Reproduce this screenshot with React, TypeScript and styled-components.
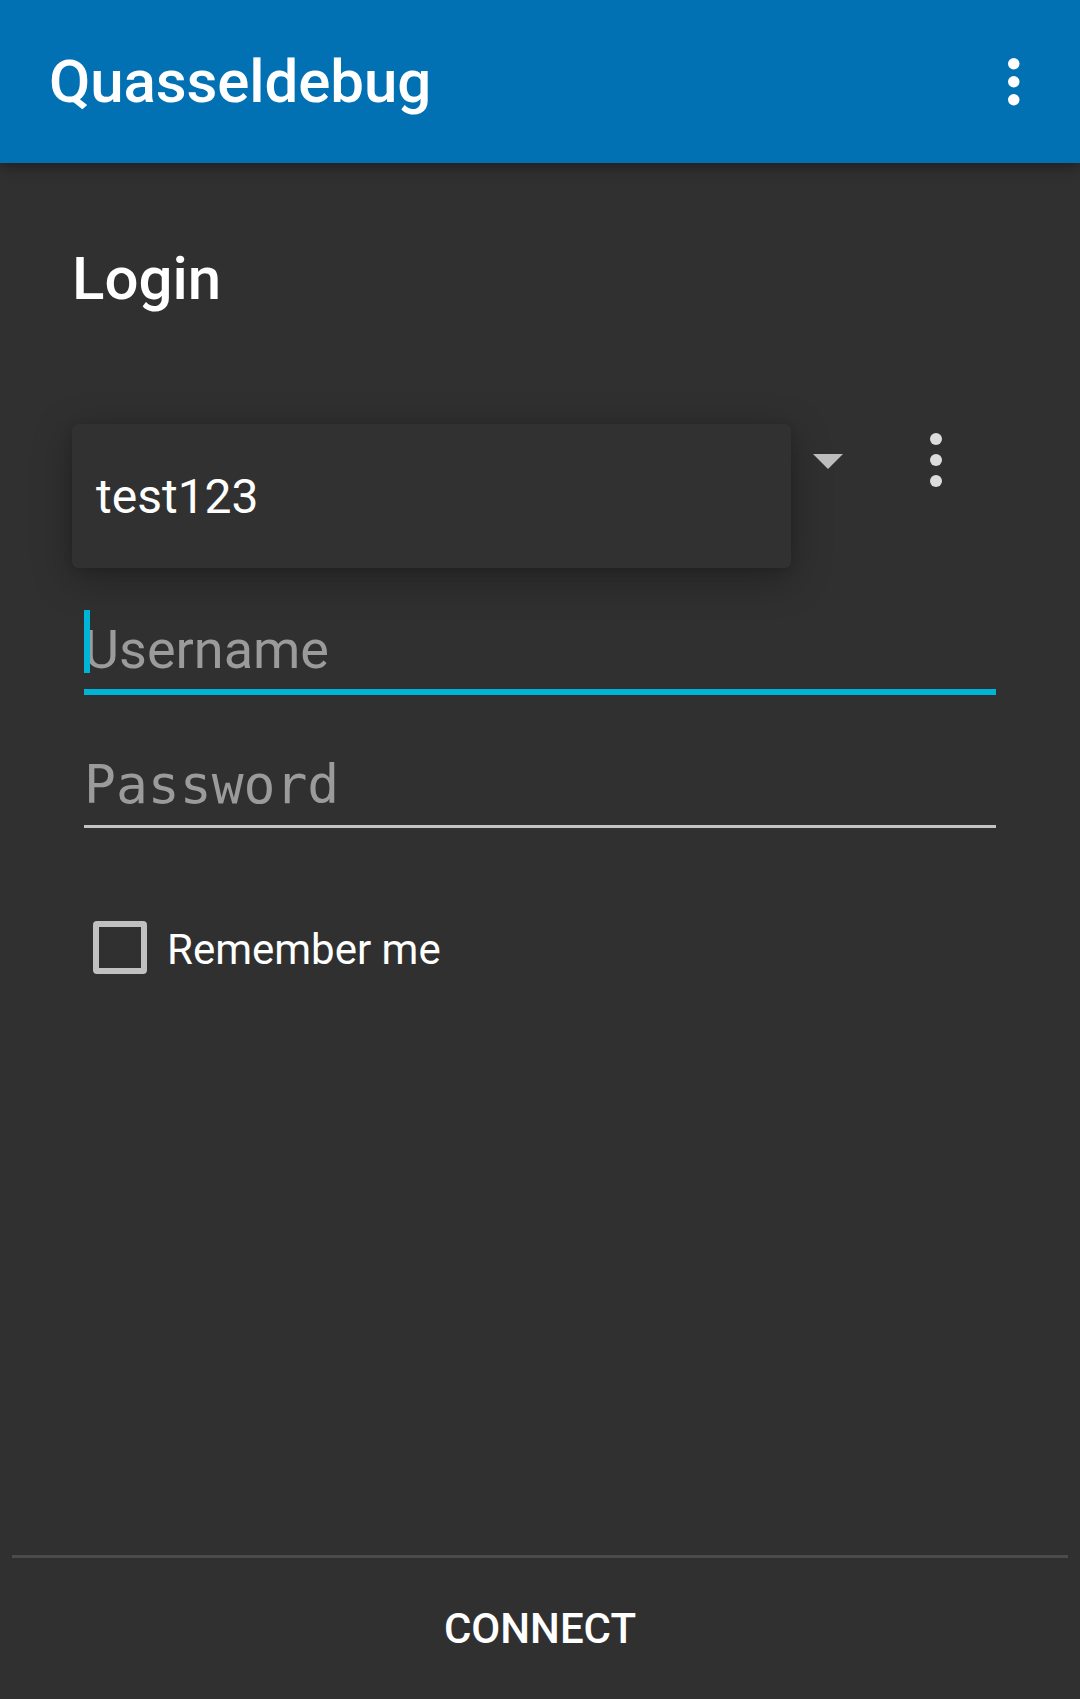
import React from "react";
import styled, { createGlobalStyle } from "styled-components";

const GlobalStyle = createGlobalStyle`
  html, body {
    margin: 0;
    padding: 0;
    background: #303030;
  }
  body {
    font-family: Roboto, "Noto Sans", "Liberation Sans", sans-serif;
    color: #ffffff;
  }
  * { box-sizing: border-box; }
`;

const Screen = styled.div`
  display: flex;
  flex-direction: column;
  height: 100vh;
  background: #303030;
  overflow: hidden;
`;

const Toolbar = styled.header`
  position: relative;
  z-index: 2;
  display: flex;
  align-items: center;
  justify-content: space-between;
  height: 163px;
  padding: 0 60px 0 49px;
  background: #0271b4;
  box-shadow: 0 3px 14px rgba(0, 0, 0, 0.4);
  flex-shrink: 0;
`;

const Title = styled.h1`
  margin: 0;
  font-family: Roboto, "Liberation Sans", sans-serif;
  font-weight: 500;
  font-size: 60px;
  line-height: 70px;
  letter-spacing: -0.1px;
  color: #ffffff;
`;

const Main = styled.main`
  flex: 1;
  display: flex;
  flex-direction: column;
  padding: 0 84px 0 72px;
`;

const Heading = styled.h2`
  margin: 81px 0 0;
  font-family: Roboto, "Liberation Sans", sans-serif;
  font-weight: 500;
  font-size: 60px;
  line-height: 70px;
  color: #ffffff;
`;

const SpinnerRow = styled.div`
  display: flex;
  align-items: flex-start;
  margin-top: 110px;
  height: 144px;
`;

const SpinnerCard = styled.div`
  display: flex;
  align-items: center;
  width: 719px;
  height: 144px;
  padding-left: 24px;
  background: #313131;
  border-radius: 6px;
  box-shadow: 0 10px 40px rgba(0, 0, 0, 0.3), 0 2px 8px rgba(0, 0, 0, 0.12);
  font-size: 48px;
  color: #ffffff;
`;

const Arrow = styled.svg`
  margin: 30px 0 0 22px;
  flex-shrink: 0;
`;

const MoreIcon = styled.svg`
  margin: 9px 0 0 87px;
  flex-shrink: 0;
`;

const Field = styled.div<{ $first?: boolean }>`
  display: flex;
  flex-direction: column;
  margin: ${(p) => (p.$first ? "49.6px" : "58.4px")} 0 0 12px;
`;

const FieldText = styled.div<{ $mono?: boolean }>`
  position: relative;
  height: 64px;
  font-family: ${(p) =>
    p.$mono
      ? `"DejaVu Sans Mono", "Liberation Mono", monospace`
      : `Roboto, "Liberation Sans", sans-serif`};
  font-size: ${(p) => (p.$mono ? "53px" : "54px")};
  line-height: 64px;
  color: #9b9b9b;
  white-space: nowrap;
`;

const Caret = styled.span`
  position: absolute;
  left: 0;
  top: -8px;
  width: 6px;
  height: 63px;
  background: #00b4d8;
`;

const Underline = styled.div<{ $focused?: boolean }>`
  margin-top: ${(p) => (p.$focused ? "7.4px" : "7.6px")};
  height: ${(p) => (p.$focused ? "6px" : "3px")};
  background: ${(p) => (p.$focused ? "#00b4d8" : "#c4c4c4")};
`;

const CheckRow = styled.label`
  display: flex;
  align-items: center;
  margin: 93px 0 0 21px;
  gap: 20px;
`;

const CheckBox = styled.span`
  width: 54px;
  height: 53px;
  border: 6px solid #c0c0c0;
  border-radius: 4px;
  flex-shrink: 0;
`;

const CheckLabel = styled.span`
  font-family: Roboto, "Liberation Sans", sans-serif;
  font-size: 42px;
  line-height: 50px;
  padding-top: 4px;
  color: #ffffff;
`;

const Footer = styled.footer`
  display: flex;
  flex-direction: column;
  flex-shrink: 0;
`;

const Divider = styled.div`
  height: 3px;
  margin: 0 12px;
  background: #4b4b4b;
`;

const ConnectButton = styled.button`
  height: 141px;
  border: none;
  background: transparent;
  font-family: Roboto, "Liberation Sans", sans-serif;
  font-weight: 500;
  font-size: 42px;
  color: #ffffff;
  letter-spacing: 0;
  padding: 0;
`;

const Dots = ({ size, gap, color }: { size: number; gap: number; color: string }) => {
  const r = size / 2;
  return (
    <>
      <circle cx={r} cy={r} r={r} fill={color} />
      <circle cx={r} cy={r + gap} r={r} fill={color} />
      <circle cx={r} cy={r + gap * 2} r={r} fill={color} />
    </>
  );
};

export default function App() {
  return (
    <>
      <GlobalStyle />
      <Screen>
        <Toolbar>
          <Title>Quasseldebug</Title>
          <svg width="12" height="48" viewBox="0 0 12 48">
            <Dots size={11.5} gap={18} color="#ffffff" />
          </svg>
        </Toolbar>
        <Main>
          <Heading>Login</Heading>
          <SpinnerRow>
            <SpinnerCard>test123</SpinnerCard>
            <Arrow width="30" height="15" viewBox="0 0 30 15">
              <polygon points="0,0 30,0 15,15" fill="#bdbdbd" />
            </Arrow>
            <MoreIcon width="12" height="54" viewBox="0 0 12 54">
              <Dots size={12} gap={21} color="#dcdcdc" />
            </MoreIcon>
          </SpinnerRow>
          <Field $first>
            <FieldText>
              Username
              <Caret />
            </FieldText>
            <Underline $focused />
          </Field>
          <Field>
            <FieldText $mono>Password</FieldText>
            <Underline />
          </Field>
          <CheckRow>
            <CheckBox />
            <CheckLabel>Remember me</CheckLabel>
          </CheckRow>
        </Main>
        <Footer>
          <Divider />
          <ConnectButton>CONNECT</ConnectButton>
        </Footer>
      </Screen>
    </>
  );
}
